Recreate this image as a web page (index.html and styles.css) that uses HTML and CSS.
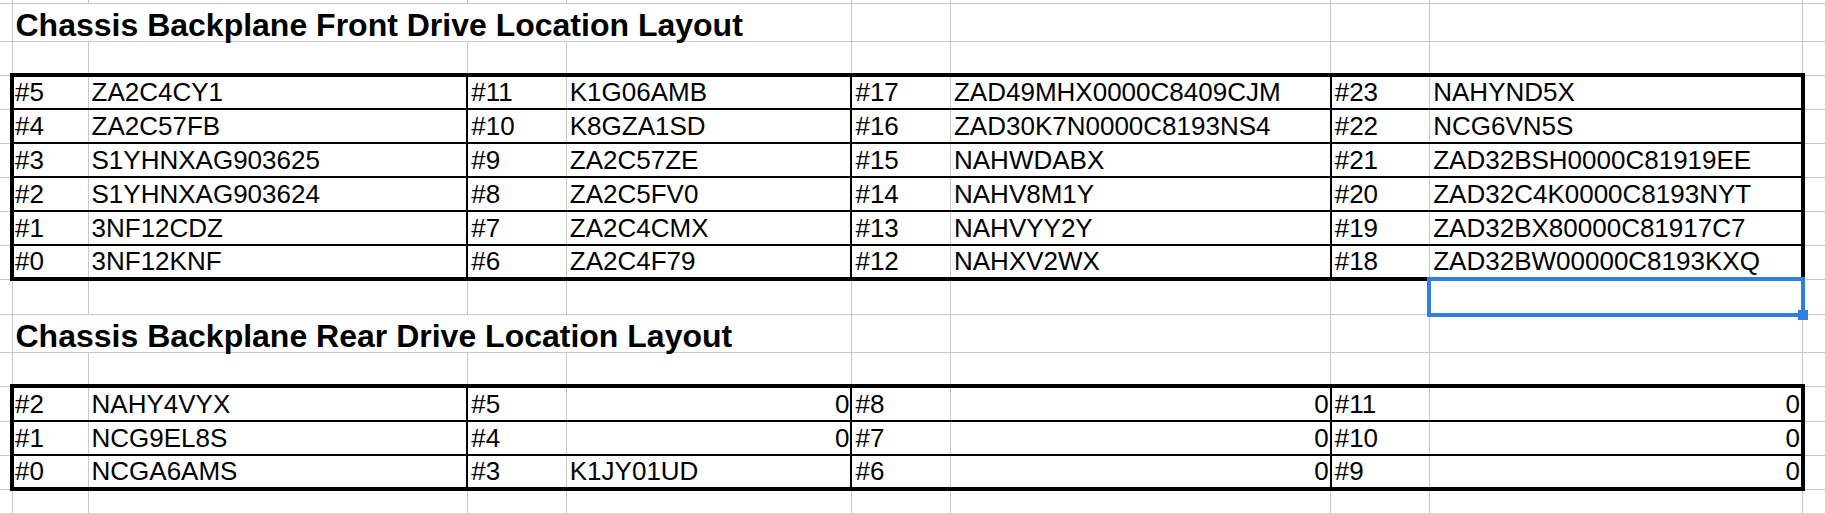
FILE: index.html
```html
<!DOCTYPE html>
<html lang="en">
<head>
<meta charset="utf-8">
<title>Chassis Backplane Drive Location Layout</title>
<link rel="stylesheet" href="styles.css">
</head>
<body>
<table class="sheet">
  <colgroup>
    <col class="c-edge">
    <col class="c-k1">
    <col class="c-v1">
    <col class="c-k">
    <col class="c-v2">
    <col class="c-k">
    <col class="c-v3">
    <col class="c-k">
    <col class="c-v4">
    <col class="c-rest">
  </colgroup>
  <tbody>
    <tr class="r-sliver"><td></td><td></td><td></td><td></td><td></td><td></td><td></td><td></td><td></td><td></td></tr>
    <tr class="r-title"><td></td><td colspan="4" class="title">Chassis Backplane Front Drive Location Layout</td><td></td><td></td><td></td><td></td><td></td></tr>
    <tr class="r-std"><td></td><td></td><td></td><td></td><td></td><td></td><td></td><td></td><td></td><td></td></tr>

    <tr class="r-std data top"><td></td><td class="k first">#5</td><td class="v">ZA2C4CY1</td><td class="k">#11</td><td class="v">K1G06AMB</td><td class="k">#17</td><td class="v">ZAD49MHX0000C8409CJM</td><td class="k">#23</td><td class="v last">NAHYND5X</td><td></td></tr>
    <tr class="r-std data"><td></td><td class="k first">#4</td><td class="v">ZA2C57FB</td><td class="k">#10</td><td class="v">K8GZA1SD</td><td class="k">#16</td><td class="v">ZAD30K7N0000C8193NS4</td><td class="k">#22</td><td class="v last">NCG6VN5S</td><td></td></tr>
    <tr class="r-std data"><td></td><td class="k first">#3</td><td class="v">S1YHNXAG903625</td><td class="k">#9</td><td class="v">ZA2C57ZE</td><td class="k">#15</td><td class="v">NAHWDABX</td><td class="k">#21</td><td class="v last">ZAD32BSH0000C81919EE</td><td></td></tr>
    <tr class="r-std data"><td></td><td class="k first">#2</td><td class="v">S1YHNXAG903624</td><td class="k">#8</td><td class="v">ZA2C5FV0</td><td class="k">#14</td><td class="v">NAHV8M1Y</td><td class="k">#20</td><td class="v last">ZAD32C4K0000C8193NYT</td><td></td></tr>
    <tr class="r-std data"><td></td><td class="k first">#1</td><td class="v">3NF12CDZ</td><td class="k">#7</td><td class="v">ZA2C4CMX</td><td class="k">#13</td><td class="v">NAHVYY2Y</td><td class="k">#19</td><td class="v last">ZAD32BX80000C81917C7</td><td></td></tr>
    <tr class="r-std data bottom"><td></td><td class="k first">#0</td><td class="v">3NF12KNF</td><td class="k">#6</td><td class="v">ZA2C4F79</td><td class="k">#12</td><td class="v">NAHXV2WX</td><td class="k">#18</td><td class="v last">ZAD32BW00000C8193KXQ</td><td></td></tr>

    <tr class="r-gap"><td></td><td></td><td></td><td></td><td></td><td></td><td></td><td></td><td class="cursor-cell"><span class="cursor"><span class="cursor-handle"></span></span></td><td></td></tr>
    <tr class="r-title"><td></td><td colspan="4" class="title">Chassis Backplane Rear Drive Location Layout</td><td></td><td></td><td></td><td></td><td></td></tr>
    <tr class="r-std"><td></td><td></td><td></td><td></td><td></td><td></td><td></td><td></td><td></td><td></td></tr>

    <tr class="r-gap data top"><td></td><td class="k first">#2</td><td class="v">NAHY4VYX</td><td class="k">#5</td><td class="v n">0</td><td class="k">#8</td><td class="v n">0</td><td class="k">#11</td><td class="v n last">0</td><td></td></tr>
    <tr class="r-std data"><td></td><td class="k first">#1</td><td class="v">NCG9EL8S</td><td class="k">#4</td><td class="v n">0</td><td class="k">#7</td><td class="v n">0</td><td class="k">#10</td><td class="v n last">0</td><td></td></tr>
    <tr class="r-std data bottom"><td></td><td class="k first">#0</td><td class="v">NCGA6AMS</td><td class="k">#3</td><td class="v">K1JY01UD</td><td class="k">#6</td><td class="v n">0</td><td class="k">#9</td><td class="v n last">0</td><td></td></tr>

    <tr class="r-end"><td></td><td></td><td></td><td></td><td></td><td></td><td></td><td></td><td></td><td></td></tr>
  </tbody>
</table>
</body>
</html>
```

FILE: styles.css
```css
html, body {
  margin: 0;
  padding: 0;
  background: #ffffff;
  overflow: hidden;
}

body {
  width: 1825px;
  height: 513px;
  font-family: "Liberation Sans", Arial, sans-serif;
  color: #000000;
}

.sheet {
  border-collapse: collapse;
  table-layout: fixed;
  width: 1825px;
  font-size: 26px;
}

.c-edge { width: 12px; }
.c-k1 { width: 76px; }
.c-v1 { width: 379px; }
.c-k { width: 99px; }
.c-v2 { width: 285px; }
.c-v3 { width: 380px; }
.c-v4 { width: 373px; }
.c-rest { width: 22px; }

.sheet td {
  border: 1px solid #c8c8c8;
  padding: 0 2px 1px 3px;
  vertical-align: bottom;
  white-space: nowrap;
  overflow: visible;
  line-height: 30px;
}

.r-sliver { height: 3px; }
.r-sliver td { border-top: 0; line-height: 0; }
.r-title { height: 38px; }
.r-std { height: 34px; }
.r-gap { height: 35px; }
.r-end { height: 24px; }
.r-end td { border-bottom: 0; }

.sheet td:first-child { border-left: 0; }
.sheet td:last-child { border-right: 0; }

.title {
  font-size: 32px;
  font-weight: bold;
  line-height: 36px;
}

.data td.k,
.data td.v {
  border-top: 2px solid #000000;
  border-bottom: 2px solid #000000;
}

.data td.k { border-left: 2px solid #000000; }
.data td.v { border-right: 2px solid #000000; }

.data td.k.first { border-left: 4px solid #000000; padding-left: 1px; }
.data td.v.last { border-right: 4px solid #000000; }
.data.top td.k,
.data.top td.v { border-top: 4px solid #000000; }
.data.bottom td.k,
.data.bottom td.v { border-bottom: 4px solid #000000; }

.data td.v.n { text-align: right; padding-right: 1px; }

.cursor-cell { position: relative; }

.cursor {
  position: absolute;
  display: block;
  left: -3px;
  top: -4px;
  right: -3px;
  bottom: -3px;
  border: 4px solid #2f7fe0;
}

.cursor-handle {
  position: absolute;
  display: block;
  right: -7px;
  bottom: -7px;
  width: 10px;
  height: 10px;
  background: #2f7fe0;
}
```
